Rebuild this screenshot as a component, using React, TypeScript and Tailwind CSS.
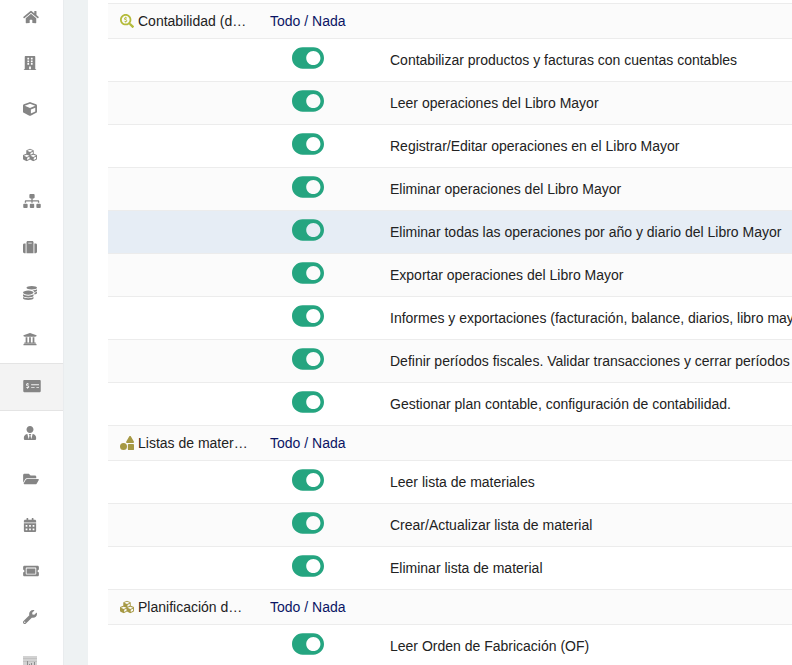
import {FunctionComponent, useState} from "react";
import {IconType} from "react-icons";
import {
    FaBuilding,
    FaCalendarAlt,
    FaCoins,
    FaCube,
    FaCubes,
    FaFolderOpen,
    FaHome,
    FaMoneyCheckAlt,
    FaSearchDollar,
    FaShapes,
    FaSitemap,
    FaSuitcase,
    FaTicketAlt,
    FaToggleOff,
    FaToggleOn,
    FaUniversity,
    FaUserTie,
    FaWrench,
} from "react-icons/fa";

const menu: { label: string; icon: IconType; size: string; active?: boolean }[] = [
    {label: 'Inicio', icon: FaHome, size: 'w-4'},
    {label: 'Terceros', icon: FaBuilding, size: 'w-3.5'},
    {label: 'Productos', icon: FaCube, size: 'w-3.5'},
    {label: 'MRP', icon: FaCubes, size: 'w-3.5'},
    {label: 'Proyectos', icon: FaSitemap, size: 'w-[18px]'},
    {label: 'Comercial', icon: FaSuitcase, size: 'w-3.5'},
    {label: 'Financiera', icon: FaCoins, size: 'w-3.5'},
    {label: 'Bancos', icon: FaUniversity, size: 'w-3.5'},
    {label: 'Contabilidad', icon: FaMoneyCheckAlt, size: 'w-[18px]', active: true},
    {label: 'RRHH', icon: FaUserTie, size: 'w-3.5'},
    {label: 'Documentos', icon: FaFolderOpen, size: 'w-4'},
    {label: 'Agenda', icon: FaCalendarAlt, size: 'w-3.5'},
    {label: 'Tickets', icon: FaTicketAlt, size: 'w-4'},
    {label: 'Utilidades', icon: FaWrench, size: 'w-3.5'},
]

const sections = [
    {
        title: 'Contabilidad (d…',
        icon: FaSearchDollar,
        color: 'text-[#b4bb3b]',
        permissions: [
            'Contabilizar productos y facturas con cuentas contables',
            'Leer operaciones del Libro Mayor',
            'Registrar/Editar operaciones en el Libro Mayor',
            'Eliminar operaciones del Libro Mayor',
            'Eliminar todas las operaciones por año y diario del Libro Mayor',
            'Exportar operaciones del Libro Mayor',
            'Informes y exportaciones (facturación, balance, diarios, libro mayor)',
            'Definir períodos fiscales. Validar transacciones y cerrar períodos',
            'Gestionar plan contable, configuración de contabilidad.',
        ],
    },
    {
        title: 'Listas de mater…',
        icon: FaShapes,
        color: 'text-[#a69944]',
        permissions: [
            'Leer lista de materiales',
            'Crear/Actualizar lista de material',
            'Eliminar lista de material',
        ],
    },
    {
        title: 'Planificación d…',
        icon: FaCubes,
        color: 'text-[#a69944]',
        permissions: ['Leer Orden de Fabricación (OF)'],
    },
]

const selected = 'Eliminar todas las operaciones por año y diario del Libro Mayor'

const ChartImage: FunctionComponent = () => (
    <svg className="h-3.5 w-3.5" viewBox="0 0 14 14">
        <rect width="14" height="14" fill="#d2d2d2"/>
        <path d="M0 2.5h14M0 5.5h14" stroke="#c2c2c2"/>
        <path d="M4.5 5v9M6.5 8v6M8.5 7v7M11.5 6v8" fill="none" stroke="#8e8e8e"/>
    </svg>
)

const Sidebar: FunctionComponent = () => (
    <nav className="w-16 shrink-0 border-r border-[#e9ecee] bg-white">
        <ul className="-mt-[5px]">
            {menu.map(({label, icon: Icon, size, active}) => (
                <li key={label} className={active ? 'border-y border-[#e4e4e4] bg-[#f3f3f3]' : ''}>
                    <a href="#" aria-label={label} className="flex h-[46px] items-center pb-0.5 pl-[23px] text-[#858585]">
                        <Icon className={`h-3.5 ${size}`}/>
                    </a>
                </li>
            ))}
            <li>
                <a href="#" aria-label="Estadísticas" className="flex h-[46px] items-center pb-0.5 pl-[23px]">
                    <ChartImage/>
                </a>
            </li>
        </ul>
    </nav>
)

const Toggle: FunctionComponent<{ label: string }> = ({label}) => {
    const [on, setOn] = useState(true)

    return (
        <button
            type="button"
            role="switch"
            aria-checked={on}
            aria-label={label}
            onClick={() => setOn(!on)}
            className="block cursor-pointer text-[#25a580]"
        >
            {on ? <FaToggleOn className="h-8 w-8"/> : <FaToggleOff className="h-8 w-8 text-gray-400"/>}
        </button>
    )
}

export default function App() {
    return (
        <div className="flex h-screen overflow-hidden bg-[#eef2f3] font-['Liberation_Sans',Arial,sans-serif] text-sm text-[#222]">
            <Sidebar/>
            <main className="ml-6 min-w-0 flex-1 overflow-hidden bg-white pt-[3px] pl-5">
                <table className="w-full border-collapse whitespace-nowrap">
                    {sections.map(({title, icon: Icon, color, permissions}) => (
                        <tbody key={title}>
                            <tr className="h-[35px] border-t border-[#ececec] bg-[#fbfbfb]">
                                <th scope="rowgroup" className="w-[162px] min-w-[162px] pl-3 text-left font-normal">
                                    <span className="flex items-center gap-1">
                                        <Icon className={`h-3.5 w-3.5 ${color}`}/>
                                        {title}
                                    </span>
                                </th>
                                <td className="w-[120px] min-w-[120px] text-[#0a1464]">
                                    <a href="#">Todo</a> / <a href="#">Nada</a>
                                </td>
                                <td/>
                            </tr>
                            {permissions.map((permission, i) => (
                                <tr
                                    key={permission}
                                    className={`h-[43px] border-t border-[#ececec] ${
                                        permission === selected ? 'bg-[#e6edf5]' : i % 2 ? 'bg-[#fbfbfb]' : 'bg-white'
                                    }`}
                                >
                                    <td/>
                                    <td className="pb-1 pl-[22px]">
                                        <Toggle label={permission}/>
                                    </td>
                                    <td>{permission}</td>
                                </tr>
                            ))}
                        </tbody>
                    ))}
                </table>
            </main>
        </div>
    )
}
